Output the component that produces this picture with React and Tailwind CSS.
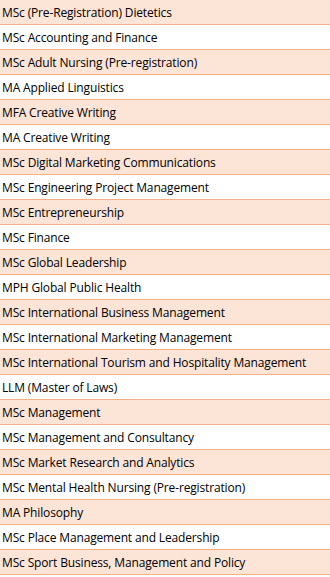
const courses = [
  'MSc (Pre-Registration) Dietetics',
  'MSc Accounting and Finance',
  'MSc Adult Nursing (Pre-registration)',
  'MA Applied Linguistics',
  'MFA Creative Writing',
  'MA Creative Writing',
  'MSc Digital Marketing Communications',
  'MSc Engineering Project Management',
  'MSc Entrepreneurship',
  'MSc Finance',
  'MSc Global Leadership',
  'MPH Global Public Health',
  'MSc International Business Management',
  'MSc International Marketing Management',
  'MSc International Tourism and Hospitality Management',
  'LLM (Master of Laws)',
  'MSc Management',
  'MSc Management and Consultancy',
  'MSc Market Research and Analytics',
  'MSc Mental Health Nursing (Pre-registration)',
  'MA Philosophy',
  'MSc Place Management and Leadership',
  'MSc Sport Business, Management and Policy',
]

export default function App() {
  return (
    <div className="w-[330px] h-[577px] overflow-hidden bg-white font-['Open_Sans','Noto_Sans',sans-serif]">
      {courses.map((name, i) => (
        <div
          key={name}
          className={`h-[25px] border-b border-[#f4b084] flex items-center pl-[2px] pt-[1px] text-[12px] tracking-[-0.15px] text-black whitespace-nowrap ${
            i % 2 === 0 ? 'bg-[#fce4d6]' : 'bg-white'
          }`}
        >
          {name}
        </div>
      ))}
    </div>
  )
}
